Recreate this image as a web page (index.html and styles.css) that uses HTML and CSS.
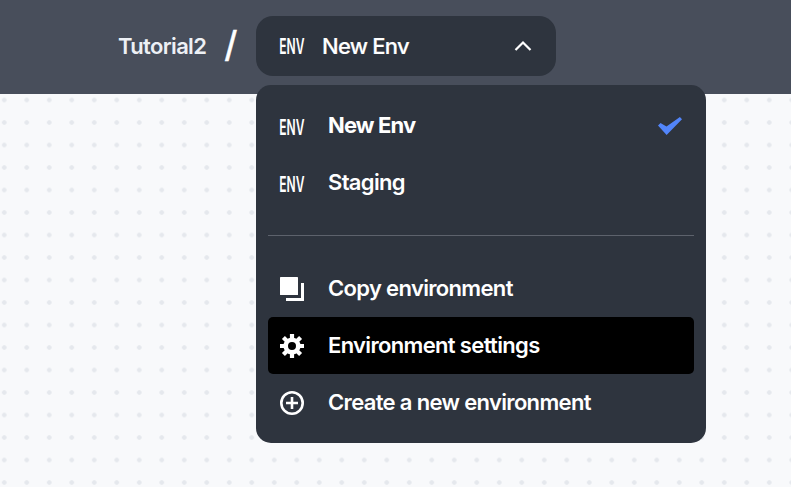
FILE: index.html
```html
<!DOCTYPE html>
<html lang="en">
<head>
<meta charset="utf-8">
<title>Environments</title>
<link rel="stylesheet" href="styles.css">
</head>
<body>
<header class="topbar">
  <span class="project">Tutorial2</span>
  <span class="slash">/</span>
  <div class="picker">
    <button class="trigger" type="button">
      <svg class="icon env" viewBox="0 0 24 24"><text x="-0.8" y="20" textLength="25.2" lengthAdjust="spacingAndGlyphs">ENV</text></svg>
      <span class="current">New Env</span>
      <svg class="chevron" viewBox="0 0 18 12"><path d="M1.5 10 9 2.500l7.500 7.500"/></svg>
    </button>
    <div class="menu">
      <div class="item selected">
        <svg class="icon env" viewBox="0 0 24 24"><text x="-0.8" y="21" textLength="25.2" lengthAdjust="spacingAndGlyphs">ENV</text></svg>
        <span class="label">New Env</span>
        <svg class="icon check" viewBox="0 0 24 24"><path d="M0 11.500 2.500 9 8.500 12.600 21.900 2.900 24 5.300 8.600 21Z"/></svg>
      </div>
      <div class="item">
        <svg class="icon env" viewBox="0 0 24 24"><text x="-0.8" y="21" textLength="25.2" lengthAdjust="spacingAndGlyphs">ENV</text></svg>
        <span class="label">Staging</span>
      </div>
      <hr class="divider">
      <div class="item">
        <svg class="icon" viewBox="0 0 24 24"><rect width="18" height="18" rx=".6"/><path d="M21 6h3v17.400q0 .6-.6.6H6v-3h15Z"/></svg>
        <span class="label">Copy environment</span>
      </div>
      <div class="item active">
        <svg class="icon gear" viewBox="-12 -12 24 24">
          <path class="teeth" d="M0-12V-6M0 12V6M-12 0H-6M12 0H6M-8.600-8.600-5-5M8.600 8.600 5 5M-8.600 8.600-5 5M8.600-8.600 5-5"/>
          <circle class="ring" r="6.300"/>
        </svg>
        <span class="label">Environment settings</span>
      </div>
      <div class="item">
        <svg class="icon outline" viewBox="0 0 24 24"><circle cx="12" cy="12" r="10.700"/><path d="M12 6v12M6 12h12"/></svg>
        <span class="label">Create a new environment</span>
      </div>
    </div>
  </div>
</header>
<main class="canvas"></main>
</body>
</html>
```
FILE: styles.css
```css
* { box-sizing: border-box; }
body {
  margin: 0;
  height: 487px;
  display: flex;
  flex-direction: column;
  overflow: hidden;
  font-family: Inter, "Liberation Sans", sans-serif;
  font-size: 22px;
  font-weight: 500;
  color: #fff;
}
.topbar {
  height: 94px;
  flex: none;
  display: flex;
  align-items: flex-start;
  padding: 16px 0 0 118px;
  background: #484e5b;
}
.project {
  width: 107px;
  line-height: 60px;
  font-weight: 600;
  letter-spacing: -0.65px;
  color: #edf0f5;
}
.slash {
  width: 31px;
  height: 62px;
  font: 400 42px/62px "Liberation Sans", sans-serif;
  -webkit-text-stroke: 0.4px;
}
.picker { position: relative; }
.trigger {
  width: 300px;
  height: 60px;
  display: flex;
  align-items: center;
  padding: 0 24px;
  border: 0;
  border-radius: 17px;
  background: #2e343e;
  color: inherit;
  font: inherit;
}
.current { margin-left: 18px; letter-spacing: -0.75px; -webkit-text-stroke: 0.2px; }
.chevron { width: 18px; height: 12px; margin-left: auto; }
.chevron path { fill: none; stroke: #fff; stroke-width: 2.2; }
.menu {
  position: absolute;
  z-index: 1;
  top: 69px;
  left: 0;
  width: 450px;
  height: 358px;
  padding: 12px;
  border-radius: 15px;
  background: #2e343e;
}
.item {
  height: 57px;
  display: flex;
  align-items: center;
  gap: 24px;
  padding: 0 12px;
  border-radius: 5px;
}
.active { background: #000; }
.label { padding-bottom: 2px; white-space: nowrap; letter-spacing: -0.66px; font-weight: 600; }
.selected .label { font-weight: 700; letter-spacing: -0.85px; }
.icon { width: 24px; height: 24px; flex: none; fill: #fff; overflow: visible; }
.env text { font: 600 22px Inter, sans-serif; }
.check { margin-left: auto; fill: #5285fa; }
.gear { fill: none; stroke: #fff; }
.teeth { stroke-width: 4.200; }
.ring { stroke-width: 4.600; }
.outline { fill: none; stroke: #fff; stroke-width: 2.600; }
.divider { height: 1px; margin: 24px 0; border: 0; background: #5d626c; }
.canvas {
  flex: 1;
  background: #f8f9fb radial-gradient(circle at 11.25px 11.25px, #e5e8ed 1.900px, transparent 2.700px) -7px -5.250px / 22.500px 22.500px;
}
```
